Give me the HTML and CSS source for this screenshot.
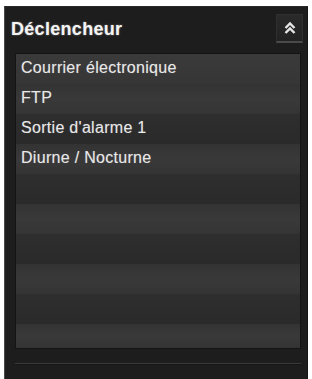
FILE: index.html
```html
<!DOCTYPE html>
<html lang="fr">
<head>
    <meta charset="UTF-8">
    <title>Déclencheur</title>
    <link rel="stylesheet" href="styles.css">
</head>
<body>
    <div class="panel">
        <div class="panel-header">
            <h1>Déclencheur</h1>
            <button class="collapse-btn" title="Réduire">
                <svg width="14" height="14" viewBox="0 0 14 14">
                    <path d="M2.5 7 L7 2.5 L11.5 7 M2.5 12 L7 7.5 L11.5 12" fill="none" stroke="#e6e6e6" stroke-width="2.4"/>
                </svg>
            </button>
        </div>

        <div class="trigger-list">
            <div class="trigger-item active">Courrier électronique</div>
            <div class="trigger-item">FTP</div>
            <div class="trigger-item">Sortie d'alarme 1</div>
            <div class="trigger-item">Diurne / Nocturne</div>
            <div class="trigger-item"></div>
            <div class="trigger-item"></div>
            <div class="trigger-item"></div>
            <div class="trigger-item"></div>
            <div class="trigger-item"></div>
            <div class="trigger-item last"></div>
        </div>

        <div class="panel-footer">
            <div class="footer-line"></div>
        </div>
    </div>
</body>
</html>
```

FILE: styles.css
```css
* {
    margin: 0;
    padding: 0;
    box-sizing: border-box;
}

body {
    font-family: "Liberation Sans", Arial, sans-serif;
    background: #fff;
    padding: 6px 4px 0 4px;
}

.panel {
    height: 373px;
    background: #1d1d1d;
    border-left: 1px solid #4a4a4a;
    border-top: 1px solid #2a2a2a;
    border-right: 1px solid #151515;
    display: flex;
    flex-direction: column;
}

.panel-header {
    height: 40px;
    display: flex;
    align-items: center;
    justify-content: space-between;
    padding: 0 4px 0 6px;
}

.panel-header h1 {
    font-size: 18px;
    font-weight: bold;
    margin-top: 4px;
    color: #f4f4f4;
    text-shadow: 0 0 2px rgba(255,255,255,0.45);
    letter-spacing: 0.3px;
}

.collapse-btn {
    width: 27px;
    height: 29px;
    margin-top: 2px;
    background: linear-gradient(#2a2a2a, #222);
    border: 1px solid #2f2f2f;
    border-bottom: 2px solid #4a4a4a;
    display: flex;
    align-items: center;
    justify-content: center;
}

.trigger-list {
    margin: 6px 6px 0 10px;
    height: 296px;
    border: 1px solid #141414;
    background: #2a2a2a;
    display: flex;
    flex-direction: column;
}

.trigger-item {
    height: 30px;
    display: flex;
    align-items: center;
    padding: 0 0 3px 5px;
    font-size: 16px;
    color: #e8e8e8;
    letter-spacing: 0.3px;
    text-shadow: 0 0 1px rgba(255,255,255,0.3);
    background: linear-gradient(#2e2e2e, #2a2a2a);
}

.trigger-item:nth-child(even) {
    background: linear-gradient(#333, #393939 50%, #343434);
}

.trigger-item.active {
    background: linear-gradient(#3a3a3a, #363636);
}

.trigger-item.last {
    flex: 1;
}

.panel-footer {
    flex: 1;
    padding: 0 6px 0 10px;
    display: flex;
    align-items: center;
}

.footer-line {
    width: 100%;
    height: 2px;
    background: #3a3a3a;
    border-bottom: 1px solid #151515;
}
```
